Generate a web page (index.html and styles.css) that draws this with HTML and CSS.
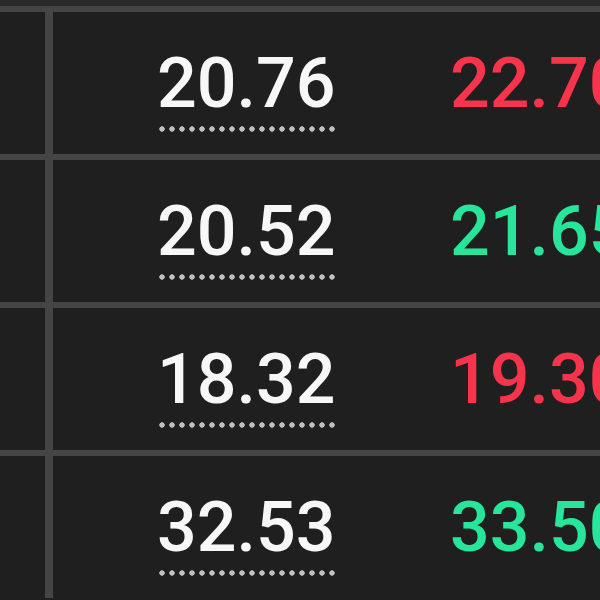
FILE: index.html
```html
<!DOCTYPE html>
<html lang="en">
<head>
  <meta charset="UTF-8">
  <title>Prices</title>
  <link rel="stylesheet" href="styles.css">
</head>
<body>
  <div class="price-table">
    <div class="price-row">
      <div class="cell-side"></div>
      <div class="cell-price"><span class="price-value">20.76</span></div>
      <div class="cell-target down">22.70</div>
    </div>
    <div class="price-row">
      <div class="cell-side"></div>
      <div class="cell-price"><span class="price-value">20.52</span></div>
      <div class="cell-target up">21.65</div>
    </div>
    <div class="price-row">
      <div class="cell-side"></div>
      <div class="cell-price"><span class="price-value">18.32</span></div>
      <div class="cell-target down">19.30</div>
    </div>
    <div class="price-row">
      <div class="cell-side"></div>
      <div class="cell-price"><span class="price-value">32.53</span></div>
      <div class="cell-target up">33.50</div>
    </div>
  </div>
</body>
</html>
```

FILE: styles.css
```css
body {
  margin: 0;
  padding: 0;
  background-color: #1f1f1f;
  font-family: Roboto, 'Liberation Sans', sans-serif;
  overflow: hidden;
}
.price-table {
  border-top: 6px solid #2a2a2a;
}
.price-row {
  display: grid;
  grid-template-columns: 53px 397px 1fr;
  height: 142px;
  border-top: 6px solid #454545;
}
.cell-side {
  border-right: 8px solid #454545;
}
.cell-price {
  padding-left: 104px;
  padding-top: 36px;
}
.price-value {
  display: inline-block;
  font-size: 70px;
  font-weight: 500;
  line-height: 70px;
  color: #f7f7f7;
  padding-bottom: 14px;
  background: radial-gradient(circle, #c0c0c0 2.4px, transparent 3px) 0 100% / 10px 6px repeat-x;
}
.cell-target {
  padding-top: 36px;
  font-size: 70px;
  font-weight: 500;
  line-height: 70px;
  white-space: nowrap;
  overflow: hidden;
}
.down {
  color: #f8344c;
}
.up {
  color: #27e69c;
}
```
